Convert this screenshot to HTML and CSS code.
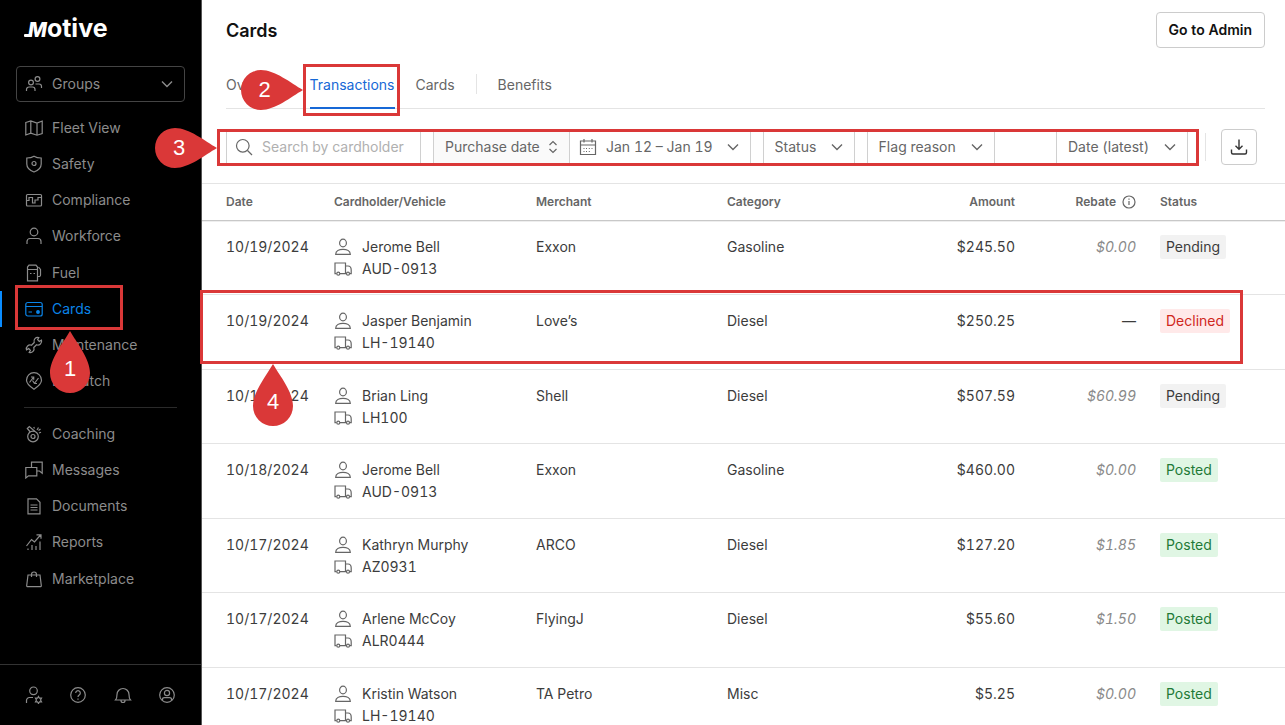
FILE: index.html
```html
<!DOCTYPE html>
<html lang="en">
<head>
    <meta charset="UTF-8">
    <meta name="viewport" content="width=device-width, initial-scale=1.0">
    <title>Cards - Transactions</title>
    <link rel="stylesheet" href="styles.css">
</head>
<body>
    <!-- Shared icons -->
    <svg class="sprite" aria-hidden="true">
        <symbol id="chevron" viewBox="0 0 12 12"><path d="M1 3.5l5 5 5-5"/></symbol>
        <symbol id="person" viewBox="0 0 18 18"><ellipse cx="9" cy="5" rx="3.4" ry="3.8"/><path d="M1.700 16.300c0-3.300 3.500-5 7.300-5s7.300 1.700 7.300 5z"/></symbol>
        <symbol id="truck" viewBox="0 0 18 18"><path d="M2.500 13.700H1V3h10.500v10.700H6M11.500 6h2.500c2 0 3.200 2 3.200 4v3.700h-1.500M11.500 13.700h1"/><circle cx="4.300" cy="13.700" r="1.500"/><circle cx="14" cy="13.700" r="1.500"/></symbol>
        <symbol id="drop" viewBox="0 0 40 62"><path d="M20 0C27 12 40 28 40 42a20 20 0 0 1-40 0C0 28 13 12 20 0z"/></symbol>
        <symbol id="drop-right" viewBox="0 0 62 40"><path d="M62 20C50 27 34 40 20 40a20 20 0 0 1 0-40C34 0 50 13 62 20z"/></symbol>
    </svg>

    <aside class="sidebar">
        <a href="#" class="logo" aria-label="Motive"><span class="logo-m">M</span>otive</a>
        <button type="button" class="groups">
            <svg class="icon" viewBox="0 0 18 18"><circle cx="6" cy="7.500" r="2.400"/><circle cx="12.500" cy="4" r="2.400"/><path d="M1.500 16v-1.500a2.500 2.500 0 0 1 2.500-2.500h3.500a2.500 2.500 0 0 1 2.500 2.500V16M10.500 9h3.500a2.500 2.500 0 0 1 2.500 2.500V13"/></svg>
            <span>Groups</span>
            <svg class="chevron"><use href="#chevron"/></svg>
        </button>
        <nav>
            <ul class="menu">
                <li><a href="#"><svg class="icon" viewBox="0 0 18 18"><path d="M.8 3.500l5-1.500 6.200 2 5.200-2v12.500l-5.200 1.700-6.200-2-5 1.800zM5.800 2v12.200M12 4v12.200"/></svg>Fleet View</a></li>
                <li><a href="#"><svg class="icon" viewBox="0 0 18 18"><path d="M9 1.200C7 2.500 4.500 3 1.800 3v6c0 4 3 6.500 7.200 8 4.200-1.500 7.200-4 7.200-8V3C13.500 3 11 2.500 9 1.200z"/><circle cx="9" cy="8.500" r="2"/></svg>Safety</a></li>
                <li><a href="#"><svg class="icon" viewBox="0 0 18 18"><rect x="1.500" y="3.500" width="15" height="11.500" rx="1"/><path d="M1.500 9.500h2.500v-3h3.500v5.500h2.500V9h3v-2.500h3.500"/></svg>Compliance</a></li>
                <li><a href="#"><svg class="icon" viewBox="0 0 18 18"><circle cx="9" cy="5" r="3.800"/><path d="M2 17v-2.500a3 3 0 0 1 3-3h8a3 3 0 0 1 3 3V17"/></svg>Workforce</a></li>
                <li><a href="#"><svg class="icon" viewBox="0 0 18 18"><path d="M2.500 16.800V3l1.500-1.800h7L12.500 3v13.800zM2.500 5.500h10M5 9.500h1.500M8.500 9.500H10M12.500 12.500h1.500a1.500 1.500 0 0 0 1.500-1.500V5.500L13.500 3"/></svg>Fuel</a></li>
                <li class="active">
                    <a href="#"><svg class="icon" viewBox="0 0 18 18"><rect x=".8" y="2.500" width="16.400" height="13.500" rx="2"/><path d="M.8 6.500h16.400M3.500 12h3.500"/><circle cx="13" cy="12" r="1.300" fill="currentColor"/></svg>Cards</a>
                    <div class="callout callout-1"><div class="marker"><svg><use href="#drop"/></svg><span>1</span></div></div>
                </li>
                <li><a href="#"><svg class="icon" viewBox="0 0 18 18"><path d="M13.800 1.500a3.800 3.800 0 0 0-4.600 5L6.500 9.200a3.800 3.800 0 0 0-5 4.600l2.200-1.200 1.700 1.700-1.200 2.200a3.800 3.800 0 0 0 4.600-5l2.700-2.700a3.800 3.800 0 0 0 5-4.600l-2.200 1.200-1.700-1.700z"/></svg>Maintenance</a></li>
                <li><a href="#"><svg class="icon" viewBox="0 0 18 18"><path d="M9 17.200C5 14.500 1.500 12 1.500 8.200a7.500 7.500 0 0 1 15 0c0 3.800-3.500 6.300-7.500 9z"/><path d="M4.500 10.500L8.700 5M6 5h2.700v2.700M7.500 8.500l2 3M13.500 6l-4.200 5.500M12 11.500H9.300"/></svg>Dispatch</a></li>
            </ul>
            <ul class="menu menu-more">
                <li><a href="#"><svg class="icon" viewBox="0 0 18 18"><circle cx="8" cy="11.500" r="5.300"/><circle cx="8" cy="11.500" r="2"/><path d="M5.300 7L2.300 3.500l2-2L10 6.500M9.500 3.500l-.8-1.500M12 5l1.500-2.500M14 8l2-.8M13.500 5.500l2-1.500"/></svg>Coaching</a></li>
                <li><a href="#"><svg class="icon" viewBox="0 0 18 18"><path d="M6.500 6V1.200h10.700v11L14.500 10H12"/><path d="M.8 17V6.500h11v8.300H3.500z"/></svg>Messages</a></li>
                <li><a href="#"><svg class="icon" viewBox="0 0 18 18"><path d="M3 1.800h8.500l3.500 3.500v11.500H3zM5.500 8h7M5.500 10.500h7M5.500 13h7"/></svg>Documents</a></li>
                <li><a href="#"><svg class="icon" viewBox="0 0 18 18"><path d="M1.500 13l5-6.500 3 2.500 6-7M11.500 1.800h4.500v4M3 17v-1.500M7 17v-5M11 17v-4M15 17V8.500"/></svg>Reports</a></li>
                <li><a href="#"><svg class="icon" viewBox="0 0 18 18"><path d="M3 5h12l1.300 10.500a1 1 0 0 1-1 1.200H2.700a1 1 0 0 1-1-1.200zM6.500 7V4.500a2.500 2.500 0 0 1 5 0V7"/></svg>Marketplace</a></li>
            </ul>
        </nav>
        <div class="sidebar-footer">
            <button type="button" aria-label="Account settings"><svg class="icon" viewBox="0 0 18 18"><circle cx="8.500" cy="4.800" r="3.800"/><path d="M1.500 17v-2.500a3 3 0 0 1 3-3H8"/><path d="M13.500 10.500l1 1.700h2l-1 1.800 1 1.800h-2l-1 1.700-1-1.700h-2l1-1.800-1-1.800h2z"/></svg></button>
            <button type="button" aria-label="Help"><svg class="icon" viewBox="0 0 18 18"><circle cx="9" cy="9" r="7.300"/><path d="M6.700 7a2.300 2.300 0 1 1 3.500 2c-.8.500-1.200 1-1.200 2M9 12.500v1.200"/></svg></button>
            <button type="button" aria-label="Notifications"><svg class="icon" viewBox="0 0 18 18"><path d="M1.500 14c1.300-1.500 1.500-3 1.500-5.500a6 6 0 0 1 12 0c0 2.500.2 4 1.500 5.500zM7 14.500a2 2 0 0 0 4 0"/></svg></button>
            <button type="button" aria-label="Profile"><svg class="icon" viewBox="0 0 18 18"><circle cx="9" cy="9" r="7.300"/><circle cx="9" cy="7" r="2.600"/><path d="M4.500 14v-.5c0-1.200 1-1.800 2-1.800h5c1 0 2 .6 2 1.800v.5"/></svg></button>
        </div>
    </aside>

    <main>
        <header class="page-header">
            <h1>Cards</h1>
            <button type="button" class="btn">Go to Admin</button>
        </header>

        <nav class="tabs">
            <a href="#">Overview</a>
            <a href="#" class="active">Transactions
                <span class="callout callout-2"><span class="marker marker-right"><svg><use href="#drop-right"/></svg><span>2</span></span></span>
            </a>
            <a href="#">Cards</a>
            <span class="tabs-divider"></span>
            <a href="#">Benefits</a>
        </nav>

        <form class="toolbar">
            <div class="filters">
                <label class="search">
                    <svg class="icon" viewBox="0 0 18 18"><circle cx="7.800" cy="7.800" r="6.300"/><path d="M12.500 12.500l4.500 4.500"/></svg>
                    <input type="text" placeholder="Search by cardholder" aria-label="Search by cardholder">
                </label>
                <div class="field-group">
                    <div class="field field-type">
                        <select aria-label="Date type"><option>Purchase date</option></select>
                        <svg class="sort" viewBox="0 0 10 14"><path d="M1.500 5L5 1.500 8.500 5M1.500 9L5 12.500 8.500 9"/></svg>
                    </div>
                    <button type="button" class="field date-range">
                        <svg class="icon" viewBox="0 0 18 18"><path d="M1.500 3h15v13.500h-15zM1.500 7h15M5 1v3.500M13 1v3.500"/><path d="M4.500 10.500h1M7 10.500h1M9.800 10.500h1M12.500 10.500h1M4.500 13.500h1M7 13.500h1M9.800 13.500h1"/></svg>
                        Jan 12 – Jan 19
                        <svg class="chevron"><use href="#chevron"/></svg>
                    </button>
                </div>
                <div class="field">
                    <select aria-label="Status"><option>Status</option></select>
                    <svg class="chevron"><use href="#chevron"/></svg>
                </div>
                <div class="field">
                    <select aria-label="Flag reason"><option>Flag reason</option></select>
                    <svg class="chevron"><use href="#chevron"/></svg>
                </div>
                <div class="field field-sort">
                    <select aria-label="Sort by"><option>Date (latest)</option></select>
                    <svg class="chevron"><use href="#chevron"/></svg>
                </div>
                <div class="callout callout-3"><div class="marker marker-right"><svg><use href="#drop-right"/></svg><span>3</span></div></div>
            </div>
            <span class="toolbar-divider"></span>
            <button type="button" class="btn download" aria-label="Download">
                <svg class="icon" viewBox="0 0 18 18"><path d="M9 1.500v9.500M5.500 7.800L9 11.200l3.500-3.400M1.500 11.500v3a1.500 1.500 0 0 0 1.500 1.500h12a1.500 1.500 0 0 0 1.500-1.500v-3"/></svg>
            </button>
        </form>

        <table>
            <colgroup>
                <col class="col-date">
                <col class="col-holder">
                <col class="col-merchant">
                <col>
                <col class="col-amount">
                <col class="col-rebate">
                <col class="col-status">
            </colgroup>
            <thead>
                <tr>
                    <th>Date</th>
                    <th>Cardholder/Vehicle</th>
                    <th>Merchant</th>
                    <th>Category</th>
                    <th class="num">Amount</th>
                    <th class="num"><span class="rebate-head">Rebate <svg class="info" viewBox="0 0 14 14"><circle cx="7" cy="7" r="6"/><path d="M7 6v4M7 3.600v1.200"/></svg></span></th>
                    <th>Status</th>
                </tr>
            </thead>
            <tbody>
                <tr>
                    <td>10/19/2024</td>
                    <td><p><svg><use href="#person"/></svg>Jerome Bell</p><p><svg><use href="#truck"/></svg>AUD-0913</p></td>
                    <td>Exxon</td>
                    <td>Gasoline</td>
                    <td class="num">$245.50</td>
                    <td class="num rebate">$0.00</td>
                    <td><span class="badge">Pending</span></td>
                </tr>
                <tr>
                    <td>10/19/2024</td>
                    <td><p><svg><use href="#person"/></svg>Jasper Benjamin</p><p><svg><use href="#truck"/></svg>LH-19140</p></td>
                    <td>Love’s</td>
                    <td>Diesel</td>
                    <td class="num">$250.25</td>
                    <td class="num">—</td>
                    <td>
                        <span class="badge declined">Declined</span>
                        <div class="callout callout-4"><div class="marker"><svg><use href="#drop"/></svg><span>4</span></div></div>
                    </td>
                </tr>
                <tr>
                    <td>10/18/2024</td>
                    <td><p><svg><use href="#person"/></svg>Brian Ling</p><p><svg><use href="#truck"/></svg>LH100</p></td>
                    <td>Shell</td>
                    <td>Diesel</td>
                    <td class="num">$507.59</td>
                    <td class="num rebate">$60.99</td>
                    <td><span class="badge">Pending</span></td>
                </tr>
                <tr>
                    <td>10/18/2024</td>
                    <td><p><svg><use href="#person"/></svg>Jerome Bell</p><p><svg><use href="#truck"/></svg>AUD-0913</p></td>
                    <td>Exxon</td>
                    <td>Gasoline</td>
                    <td class="num">$460.00</td>
                    <td class="num rebate">$0.00</td>
                    <td><span class="badge posted">Posted</span></td>
                </tr>
                <tr>
                    <td>10/17/2024</td>
                    <td><p><svg><use href="#person"/></svg>Kathryn Murphy</p><p><svg><use href="#truck"/></svg>AZ0931</p></td>
                    <td>ARCO</td>
                    <td>Diesel</td>
                    <td class="num">$127.20</td>
                    <td class="num rebate">$1.85</td>
                    <td><span class="badge posted">Posted</span></td>
                </tr>
                <tr>
                    <td>10/17/2024</td>
                    <td><p><svg><use href="#person"/></svg>Arlene McCoy</p><p><svg><use href="#truck"/></svg>ALR0444</p></td>
                    <td>FlyingJ</td>
                    <td>Diesel</td>
                    <td class="num">$55.60</td>
                    <td class="num rebate">$1.50</td>
                    <td><span class="badge posted">Posted</span></td>
                </tr>
                <tr>
                    <td>10/17/2024</td>
                    <td><p><svg><use href="#person"/></svg>Kristin Watson</p><p><svg><use href="#truck"/></svg>LH-19140</p></td>
                    <td>TA Petro</td>
                    <td>Misc</td>
                    <td class="num">$5.25</td>
                    <td class="num rebate">$0.00</td>
                    <td><span class="badge posted">Posted</span></td>
                </tr>
            </tbody>
        </table>
    </main>
</body>
</html>
```
FILE: styles.css
```css
* {
    box-sizing: border-box;
}

body {
    font-family: Inter, sans-serif;
    font-size: 14px;
    font-variant-numeric: tabular-nums;
    line-height: 22px;
    color: #3c3c3c;
    background: #fff;
    margin: 0;
    height: 100vh;
    display: flex;
    overflow: hidden;
}

h1, p, ul {
    margin: 0;
    padding: 0;
}

a {
    color: inherit;
    text-decoration: none;
}

button, input, select {
    font: inherit;
    font-variant-numeric: tabular-nums;
    color: inherit;
    background: none;
    border: none;
    padding: 0;
    margin: 0;
}

button {
    cursor: pointer;
}

svg {
    fill: none;
    stroke: currentColor;
    stroke-width: 1.2;
    flex: none;
}

.sprite {
    position: absolute;
    width: 0;
    height: 0;
}

.icon {
    width: 18px;
    height: 18px;
}

.chevron {
    width: 12px;
    height: 12px;
    stroke-width: 1.4;
}

/* Sidebar */
.sidebar {
    flex: none;
    width: 202px;
    background: #000;
    color: #8c8c8c;
    border-right: 1px solid #555;
    display: flex;
    flex-direction: column;
}

.logo {
    color: #fff;
    font-size: 25px;
    font-weight: 700;
    line-height: 28px;
    padding: 14px 24px 0;
}

.logo-m {
    position: relative;
    padding-left: 4px;
    font-size: 20px;
    font-style: italic;
    font-weight: 800;
}

/* Tail on the first letter of the logo */
.logo-m::before {
    content: '';
    position: absolute;
    left: 0;
    bottom: 5px;
    width: 8px;
    height: 3px;
    background: #fff;
    border-radius: 1px 0 2px 1px;
}

.groups {
    display: flex;
    align-items: center;
    gap: 9px;
    height: 36px;
    margin: 22px 16px 0;
    padding: 0 11px 0 8px;
    border: 1px solid #444;
    border-radius: 4px;
}

.groups .chevron {
    margin-left: auto;
}

.menu {
    list-style: none;
    padding: 8px 0 7px;
}

.menu li {
    position: relative;
}

.menu li:nth-child(4n) {
    padding-bottom: 1px;
}

.menu a {
    display: flex;
    align-items: center;
    gap: 9px;
    height: 36px;
    padding-left: 25px;
}

.menu .active a {
    color: #0a84e8;
    box-shadow: inset 2px 0 #0a8cff;
}

.menu-more {
    margin: 0 24px;
    border-top: 1px solid #2a2a2a;
}

.menu-more a {
    padding-left: 1px;
}

.sidebar-footer {
    display: flex;
    justify-content: space-between;
    align-items: center;
    margin-top: auto;
    height: 61px;
    padding: 0 25px;
    border-top: 1px solid #333;
}

.sidebar-footer button {
    display: flex;
}

/* Page header and tabs */
main {
    flex: 1;
    min-width: 0;
}

.page-header {
    display: flex;
    justify-content: space-between;
    align-items: center;
    padding: 12px 20px 0 24px;
}

.page-header h1 {
    color: #111;
    font-size: 18px;
    font-weight: 600;
    line-height: 24px;
    padding-top: 2px;
}

.btn {
    height: 36px;
    padding: 0 12px;
    border: 1px solid #ccc;
    border-radius: 4px;
    color: #111;
    font-weight: 600;
}

.tabs {
    display: flex;
    gap: 21px;
    margin: 26px 20px 0 24px;
    border-bottom: 1px solid #e4e4e4;
    color: #666;
}

.tabs a {
    position: relative;
    padding-bottom: 11px;
    margin-bottom: -1px;
    border-bottom: 2px solid transparent;
}

.tabs .active {
    color: #1668d6;
    border-color: #1668d6;
}

.tabs-divider {
    width: 1px;
    height: 20px;
    background: #e4e4e4;
}

/* Filters */
.toolbar {
    display: flex;
    align-items: center;
    padding: 20px 28px 18px 24px;
    color: #666;
}

.filters {
    position: relative;
    flex: 1;
    display: flex;
    gap: 12px;
}

.search,
.field {
    position: relative;
    display: flex;
    align-items: center;
    height: 36px;
    border: 1px solid #d0d0d0;
}

.search {
    width: 195px;
    padding-left: 8px;
    gap: 9px;
}

.search input {
    flex: 1;
    min-width: 0;
    outline: none;
}

.search input::placeholder {
    color: #b0b0b0;
}

.field select {
    appearance: none;
    outline: none;
    height: 34px;
    padding: 0 37px 0 11px;
}

.field .chevron,
.field .sort {
    position: absolute;
    right: 11px;
    pointer-events: none;
}

.field .sort {
    width: 10px;
    height: 14px;
}

.field-group {
    display: flex;
}

.field-type {
    background: #fafafa;
    border-right: none;
}

.field-type select {
    padding-right: 29px;
}

.date-range {
    gap: 9px;
    padding: 0 37px 0 9px;
}

.field-sort {
    margin-left: auto;
}

.toolbar-divider {
    width: 1px;
    height: 28px;
    margin: 0 15px 0 17px;
    background: #e4e4e4;
}

.download {
    display: flex;
    align-items: center;
    justify-content: center;
    width: 36px;
    padding: 0;
    color: #333;
}

.download svg {
    stroke-width: 1.4;
}

/* Transactions */
table {
    width: 100%;
    table-layout: fixed;
    border-collapse: separate;
    border-spacing: 0;
}

.col-date {
    width: 132px;
}

.col-holder {
    width: 202px;
}

.col-merchant {
    width: 191px;
}

.col-amount {
    width: 150px;
}

.col-rebate {
    width: 121px;
}

.col-status {
    width: 149px;
}

th {
    height: 38px;
    padding: 0;
    font-size: 12px;
    font-weight: 600;
    text-align: left;
    color: #666;
    border-top: 1px solid #e4e4e4;
    border-bottom: 1px solid #c8c8c8;
    box-shadow: 0 1px 0 #eee;
}

td {
    height: 74px;
    padding: 15px 0 0;
    vertical-align: top;
    border-bottom: 1px solid #e4e4e4;
}

tbody tr {
    position: relative;
}

tbody tr:nth-child(even) td {
    height: 75px;
}

th:first-child,
td:first-child,
th:last-child,
td:last-child {
    padding-left: 24px;
}

td p {
    display: flex;
    align-items: center;
    gap: 10px;
}

td p svg {
    width: 18px;
    height: 18px;
    color: #666;
}

.num {
    text-align: right;
}

.rebate {
    color: #8a8a8a;
    font-style: italic;
}

.rebate-head {
    display: inline-flex;
    align-items: center;
    gap: 6px;
}

.info {
    width: 14px;
    height: 14px;
}

.badge {
    display: inline-block;
    padding: 1px 6px;
    border-radius: 2px;
    background: #f2f2f2;
}

td .badge {
    margin-top: -1px;
}

.declined {
    background: #ffe9e9;
    color: #d0271d;
}

.posted {
    background: #e0f6e4;
    color: #1f7a37;
}

/* Numbered callouts drawn over the page */
.callout {
    position: absolute;
    z-index: 1;
    border: 3px solid #da3838;
    pointer-events: none;
}

.callout-1 {
    top: -6px;
    left: 15px;
    width: 108px;
    height: 45px;
}

.callout-2 {
    top: -10px;
    left: -7px;
    right: -5px;
    height: 52px;
}

.callout-3 {
    top: 0;
    bottom: -1px;
    left: -9px;
    right: -11px;
}

.callout-4 {
    top: -5px;
    left: -2px;
    right: 42px;
    height: 74px;
}

.marker {
    position: absolute;
    top: 100%;
    left: 32px;
    width: 40px;
    height: 62px;
    margin-top: 4px;
    display: flex;
    justify-content: center;
    align-items: center;
    padding-top: 14px;
    color: #fff;
    font-family: "Liberation Sans", sans-serif;
    font-size: 22px;
    font-style: normal;
}

.marker svg {
    position: absolute;
    inset: 0;
    width: 100%;
    height: 100%;
    fill: #da3838;
    stroke: none;
}

.marker span {
    position: relative;
}

.marker-right {
    top: 50%;
    left: auto;
    right: 100%;
    width: 62px;
    height: 40px;
    margin: -20px 3px 0 0;
    padding: 0 14px 0 0;
}

.callout-4 .marker {
    left: 50px;
    margin-top: 3px;
}
```
